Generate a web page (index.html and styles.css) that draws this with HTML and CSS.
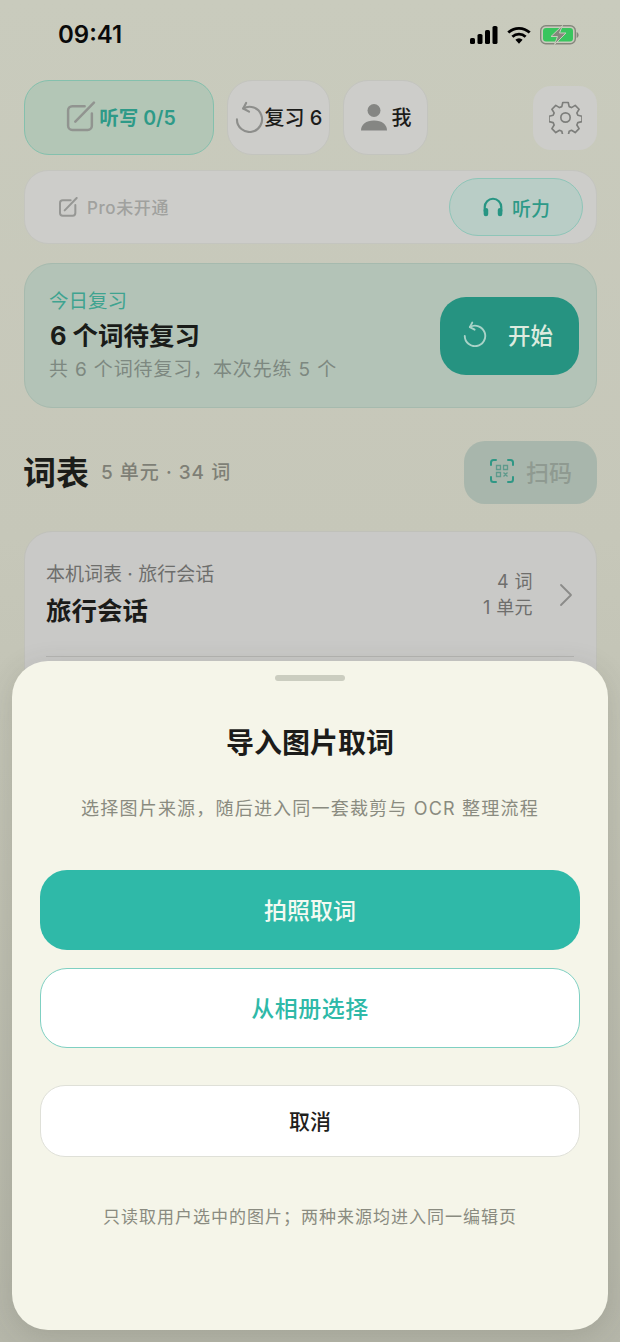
FILE: index.html
```html
<!DOCTYPE html>
<html lang="zh-CN">
<head>
<meta charset="utf-8">
<title>导入图片取词</title>
<link rel="stylesheet" href="styles.css">
</head>
<body>
<div class="page">
  <header class="status">
    <span class="time">09:41</span>
    <div class="status-icons">
      <svg class="ic-signal" viewBox="0 0 28 18"><rect x="0" y="12" width="5" height="6" rx="1.600"/><rect x="7.500" y="8" width="5" height="10" rx="1.600"/><rect x="15" y="4" width="5" height="14" rx="1.600"/><rect x="22.500" y="0" width="5" height="18" rx="1.600"/></svg>
      <svg class="ic-wifi" viewBox="0 0 24 18"><path d="M12 17.800l-3.600-4a5 5 0 0 1 7.200 0z"/><path d="M1.300 6.600a15.400 15.400 0 0 1 21.400 0" fill="none" stroke="#000" stroke-width="2.800"/><path d="M5.400 10.800a9.600 9.600 0 0 1 13.200 0" fill="none" stroke="#000" stroke-width="2.800"/></svg>
      <svg class="ic-batt" viewBox="0 0 40 20"><rect x="0.700" y="0.700" width="34.600" height="18.100" rx="5" fill="none" stroke="#85877d" stroke-width="1.400"/><rect x="3" y="3" width="30" height="13.600" rx="3" fill="#39c55e"/><path d="M36.600 7v6c1.300-.5 2-1.700 2-3s-.7-2.500-2-3z" fill="#85877d"/><path d="M22.500 0.500L11 11.500h6.500L14.500 19.500 26 8h-6.500z" fill="#85877d" stroke="#c9cbbd" stroke-width="1"/></svg>
    </div>
  </header>

  <nav class="tabs">
    <div class="tab tab-active">
      <svg class="ic-note" viewBox="0 0 30 30"><path d="M19 5H7a4 4 0 0 0-4 4v15a4 4 0 0 0 4 4h15a4 4 0 0 0 4-4V12"/><path d="M10 20L28 1.500"/></svg>
      <span class="tab-active-label">听写 0/5</span>
    </div>
    <div class="tab tab-review">
      <svg class="ic-undo" viewBox="0 0 30 33"><path d="M11.500 2L8.500 7.700l6 3.300"/><path d="M8.500 7.700A13 13 0 1 1 2 19"/></svg>
      <span class="tab-label">复习 6</span>
    </div>
    <div class="tab tab-me">
      <svg class="ic-person" viewBox="0 0 28 28"><circle cx="14" cy="7.500" r="6.500"/><path d="M1 27.500c0-6 5-10 13-10s13 4 13 10z"/></svg>
      <span class="tab-label">我</span>
    </div>
    <div class="gear-btn">
      <svg class="ic-gear" viewBox="0 0 34 34"><circle cx="17" cy="17" r="4.800"/><path d="M14.200 1.500h5.600l1 4.300 2.400 1 3.800-2.300 4 4-2.300 3.800 1 2.400 4.300 1v5.600l-4.300 1-1 2.400 2.300 3.800-4 4-3.800-2.300-2.400 1-1 4.300h-5.600l-1-4.300-2.400-1-3.800 2.300-4-4 2.300-3.800-1-2.400-4.300-1v-5.600l4.300-1 1-2.400-2.300-3.800 4-4 3.800 2.300 2.400-1z" stroke-linejoin="round"/></svg>
    </div>
  </nav>

  <section class="strip">
    <div class="strip-pro">
      <svg class="ic-note-sm" viewBox="0 0 30 30"><path d="M19 5H7a4 4 0 0 0-4 4v15a4 4 0 0 0 4 4h15a4 4 0 0 0 4-4V12"/><path d="M10 20L28 1.500"/></svg>
      <span>Pro未开通</span>
    </div>
    <div class="listen-pill">
      <svg class="ic-phones" viewBox="0 0 24 24"><path d="M3 17v-5a9 9 0 0 1 18 0v5" fill="none" stroke="#279583" stroke-width="2.400"/><rect x="1.800" y="13" width="5" height="9" rx="2.400"/><rect x="17.200" y="13" width="5" height="9" rx="2.400"/></svg>
      <span>听力</span>
    </div>
  </section>

  <section class="review">
    <div class="review-text">
      <div class="review-kicker">今日复习</div>
      <div class="review-title">6 个词待复习</div>
      <div class="review-sub">共 6 个词待复习，本次先练 5 个</div>
    </div>
    <div class="start-btn">
      <svg class="ic-undo-w" viewBox="0 0 30 33"><path d="M11.500 2L8.500 7.700l6 3.300"/><path d="M8.500 7.700A13 13 0 1 1 2 19"/></svg>
      <span>开始</span>
    </div>
  </section>

  <section class="list-head">
    <h2 class="list-title">词表</h2>
    <span class="list-count">5 单元 · 34 词</span>
    <div class="scan-btn">
      <svg class="ic-scan" viewBox="0 0 26 26"><path class="scan-frame" d="M7 2H4.500A2.500 2.500 0 0 0 2 4.500V7M19 2h2.500A2.500 2.500 0 0 1 24 4.500V7M7 24H4.500A2.500 2.500 0 0 1 2 21.500V19M19 24h2.500a2.500 2.500 0 0 0 2.500-2.500V19"/><path class="scan-code" d="M7.500 7.500h4v4h-4zM14.500 7.500h4v4h-4zM7.500 14.500h4v4h-4zM14.500 14.500l4 4M18.500 14.500l-4 4"/></svg>
      <span>扫码</span>
    </div>
  </section>

  <article class="book">
    <div class="book-row">
      <div class="book-main">
        <div class="book-kicker">本机词表 · 旅行会话</div>
        <div class="book-title">旅行会话</div>
      </div>
      <div class="book-meta">
        <div>4 词</div>
        <div>1 单元</div>
      </div>
      <svg class="ic-chevron" viewBox="0 0 14 24"><path d="M2 2l10 10L2 22"/></svg>
    </div>
    <div class="book-divider"></div>
  </article>

  <aside class="sheet">
    <div class="handle"></div>
    <h1 class="sheet-title">导入图片取词</h1>
    <p class="sheet-sub">选择图片来源，随后进入同一套裁剪与 OCR 整理流程</p>
    <button class="btn btn-primary">拍照取词</button>
    <button class="btn btn-outline">从相册选择</button>
    <button class="btn btn-cancel">取消</button>
    <p class="sheet-foot">只读取用户选中的图片；两种来源均进入同一编辑页</p>
  </aside>
</div>
</body>
</html>
```

FILE: styles.css
```css
* { box-sizing: border-box; }
html, body { margin: 0; padding: 0; }
body { font-family: Inter, "Noto Sans CJK SC", sans-serif; }

.page {
  position: relative;
  width: 620px;
  height: 1342px;
  overflow: hidden;
  padding: 0 23px 0 24px;
  background: linear-gradient(180deg, #c9cbbd 0%, #c6c7b9 40%, #c0c1b3 65%, #b5b6a9 100%);
}

/* status bar */
.status {
  height: 80px;
  display: flex;
  align-items: flex-start;
  justify-content: space-between;
  padding: 19px 17px 0 34px;
}
.time { font-size: 24px; line-height: 32px; font-weight: 600; color: #0a0a0a; }
.status-icons { display: flex; align-items: center; gap: 9px; padding-top: 6px; }
.ic-signal { width: 28px; height: 18px; fill: #000; }
.ic-wifi { width: 24px; height: 18px; fill: #000; }
.ic-batt { width: 40px; height: 20px; }

/* tabs */
.tabs { display: flex; align-items: center; gap: 13px; height: 75px; margin-bottom: 15px; }
.tab {
  height: 75px;
  border-radius: 25px;
  display: flex;
  align-items: center;
  justify-content: center;
  background: #cdcdca;
  border: 1.500px solid #c3c4be;
}
.tab-active { width: 190px; gap: 3px; background: #b3c6b6; border-color: #84c0ad; padding: 0 0 2px 3px; }
.tab-review { width: 103px; gap: 1px; padding-bottom: 2px; }
.tab-me { width: 85px; gap: 4px; padding-bottom: 2px; }
.tab-active-label { font-size: 19.500px; font-weight: 600; color: #2e9a88; }
.tab-label { font-size: 20px; font-weight: 500; color: #1c1c1a; }
.ic-note { width: 31px; height: 31px; fill: none; stroke: #919490; stroke-width: 2.400; stroke-linecap: round; }
.ic-undo { width: 29px; height: 32px; fill: none; stroke: #8d8e8b; stroke-width: 2.200; stroke-linecap: round; stroke-linejoin: round; }
.ic-person { width: 28px; height: 28px; fill: #858683; }
.gear-btn {
  margin-left: auto;
  width: 64px;
  height: 64px;
  border-radius: 18px;
  background: #cdcdca;
  display: flex;
  align-items: center;
  justify-content: center;
}
.ic-gear { width: 33px; height: 33px; fill: none; stroke: #7d7e7b; stroke-width: 1.700; }

/* pro strip */
.strip {
  height: 74px;
  margin-bottom: 19px;
  border-radius: 24px;
  background: #cdcdca;
  border: 1.500px solid #c4c5bf;
  display: flex;
  align-items: center;
  justify-content: space-between;
  padding: 0 13px 0 33px;
}
.strip-pro { display: flex; align-items: center; gap: 9px; padding-bottom: 1px; font-size: 17px; font-weight: 500; color: #a0a19e; letter-spacing: .6px; }
.ic-note-sm { width: 20px; height: 20px; fill: none; stroke: #969794; stroke-width: 3; stroke-linecap: round; }
.listen-pill {
  width: 134px;
  height: 58px;
  border-radius: 29px;
  background: #b9cdc6;
  border: 1.500px solid #8ec5b8;
  display: flex;
  align-items: center;
  justify-content: center;
  gap: 8px;
  font-size: 19px;
  font-weight: 500;
  color: #2d9a88;
}
.ic-phones { width: 22px; height: 22px; fill: #279583; }

/* review */
.review {
  height: 145px;
  margin-bottom: 33px;
  border-radius: 28px;
  background: #b3c3b7;
  border: 1.500px solid #a6baae;
  display: flex;
  align-items: center;
  justify-content: space-between;
  padding: 0 17px 0 24px;
}
.review-text { padding-bottom: 2px; }
.review-kicker { font-size: 19.500px; line-height: 34px; color: #3fa390; }
.review-title { font-size: 25.500px; line-height: 36px; font-weight: 700; color: #1a1c19; padding-left: 1px; }
.review-sub { font-size: 19px; line-height: 31px; color: #7d8880; letter-spacing: .85px; }
.start-btn {
  width: 139px;
  height: 78px;
  border-radius: 26px;
  background: #269381;
  display: flex;
  align-items: center;
  justify-content: center;
  gap: 21px;
  padding: 0 3px 3px 0;
  font-size: 22.500px;
  font-weight: 500;
  color: #dcebdf;
}
.ic-undo-w { width: 24px; height: 26px; fill: none; stroke: #a9d3c8; stroke-width: 2.400; stroke-linecap: round; stroke-linejoin: round; }

/* list head */
.list-head { height: 63px; margin-bottom: 27px; display: flex; align-items: center; }
.list-title { margin: 0 12px 4px -1px; font-size: 33px; font-weight: 700; color: #1c1d19; }
.list-count { margin-bottom: 4px; font-size: 19px; font-weight: 500; color: #7e7f76; letter-spacing: 1px; }
.scan-btn {
  margin-left: auto;
  width: 133px;
  height: 63px;
  border-radius: 21px;
  background: #a8b6ac;
  display: flex;
  align-items: center;
  justify-content: center;
  gap: 11px;
  padding-bottom: 3px;
  font-size: 23px;
  font-weight: 500;
  color: #8f9a91;
}
.ic-scan { width: 26px; height: 26px; fill: none; }
.scan-frame { stroke: #2f9785; stroke-width: 2; stroke-linecap: round; }
.scan-code { stroke: #5f9a8c; stroke-width: 1.300; }

/* list card */
.book {
  height: 500px;
  border-radius: 28px;
  background: #c9c9c7;
  border: 1.500px solid #c0c1ba;
  padding: 0 22px 0 21px;
}
.book-row { height: 124px; display: flex; align-items: center; }
.book-main { flex: 1; padding-top: 6px; }
.book-kicker { font-size: 19px; line-height: 28px; color: #6e6e6c; }
.book-title { font-size: 25.500px; line-height: 44px; font-weight: 700; color: #1b1b19; }
.book-meta { text-align: right; padding-top: 2px; font-size: 18px; line-height: 26px; color: #6e6e6c; letter-spacing: .4px; margin-right: 26px; }
.ic-chevron { width: 14px; height: 24px; margin: 2px 1px 0 0; fill: none; stroke: #8b8b89; stroke-width: 1.800; stroke-linecap: round; stroke-linejoin: round; }
.book-divider { height: 1px; background: #b4b4b2; }

/* sheet */
.sheet {
  position: absolute;
  left: 12px;
  top: 661px;
  width: 596px;
  height: 669px;
  border-radius: 36px;
  background: #f5f5e9;
  box-shadow: 0 6px 28px rgba(60, 60, 50, .16);
  padding: 14px 28px 0;
  display: flex;
  flex-direction: column;
  align-items: center;
}
.handle { width: 70px; height: 6px; border-radius: 3px; background: #cbcdc0; flex: none; }
.sheet-title { margin: 42px 0 0; font-size: 28px; line-height: 40px; font-weight: 700; color: #1c1c1a; }
.sheet-sub { margin: 32px 0 0; font-size: 18px; line-height: 28px; color: #8a8b80; letter-spacing: 1.200px; }
.btn {
  display: block;
  width: 100%;
  flex: none;
  font-family: inherit;
  padding: 0 0 2px;
  cursor: pointer;
}
.btn-primary {
  margin-top: 47px;
  height: 80px;
  border-radius: 27px;
  border: 0;
  background: #2fb9a8;
  color: #f3faf2;
  font-size: 23px;
  font-weight: 500;
}
.btn-outline {
  margin-top: 18px;
  height: 80px;
  border-radius: 27px;
  border: 1px solid #7fd0c2;
  background: #fff;
  color: #2fb9a8;
  font-size: 23px;
  font-weight: 500;
  letter-spacing: .5px;
}
.btn-cancel {
  margin-top: 37px;
  height: 72px;
  border-radius: 25px;
  border: 1px solid #dfe0d8;
  background: #fff;
  color: #1f1f1d;
  font-size: 21px;
  font-weight: 500;
}
.sheet-foot { margin: 48px 0 0; font-size: 17px; line-height: 24px; color: #8a8b80; letter-spacing: 1px; }
```
